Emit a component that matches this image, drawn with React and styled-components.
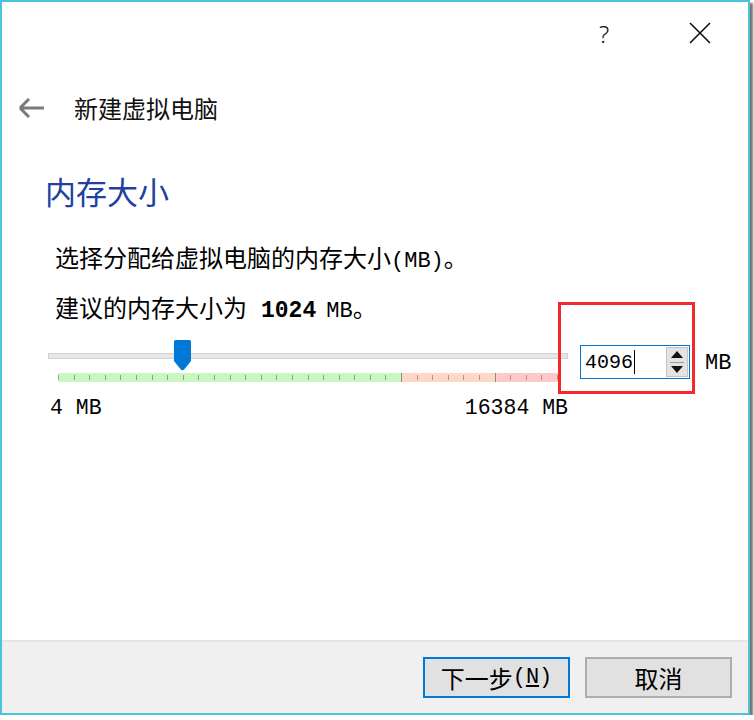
import React from "react";
import styled, { createGlobalStyle } from "styled-components";

const GlobalStyle = createGlobalStyle`
  html, body {
    margin: 0;
    padding: 0;
    background: #ffffff;
  }
  body {
    font-family: "Noto Sans CJK SC", "Noto Sans", sans-serif;
  }
`;

const Frame = styled.div`
  position: relative;
  box-sizing: border-box;
  width: 750px;
  height: 715px;
  border: 2px solid #4cc3d8;
  background: #ffffff;
  box-shadow: 3px 3px 2px rgba(0, 0, 0, 0.55);
  display: flex;
  flex-direction: column;
`;

const TitleBar = styled.div`
  height: 62px;
  display: flex;
  justify-content: flex-end;
`;

const CaptionButton = styled.div`
  width: 96px;
  height: 62px;
  display: flex;
  align-items: center;
  justify-content: center;
  font-family: "Noto Sans", sans-serif;
  font-weight: 300;
  font-size: 24px;
  color: #111;
`;

const Header = styled.div`
  height: 88px;
  display: flex;
  align-items: center;
  padding-left: 15px;
`;

const BackArrow = styled.svg`
  width: 28px;
  height: 22px;
  margin-right: 29px;
`;

const WizardTitle = styled.div`
  font-size: 24px;
  line-height: 30px;
  color: #111;
`;

const Content = styled.div`
  flex: 1;
  padding-left: 43px;
`;

const Heading = styled.div`
  margin-top: 19px;
  font-size: 31px;
  line-height: 40px;
  color: #22409f;
`;

const Line = styled.div`
  margin-left: 10px;
  margin-top: ${(p) => p.$top}px;
  font-size: 24px;
  line-height: 36px;
  color: #000;
  white-space: nowrap;
`;

const Mono = styled.span`
  font-family: "Liberation Mono", monospace;
  font-size: ${(p) => p.$size || 22}px;
  font-weight: ${(p) => (p.$bold ? 700 : 400)};
  margin: ${(p) => p.$gap || "0"};
`;

const SliderRow = styled.div`
  margin-top: 10px;
  margin-left: 3px;
  display: flex;
  align-items: flex-start;
`;

const SliderColumn = styled.div`
  width: 520px;
  display: flex;
  flex-direction: column;
`;

const Track = styled.div`
  position: relative;
  height: 31px;
`;

const Groove = styled.div`
  margin-top: 13px;
  box-sizing: border-box;
  height: 6px;
  background: #e7e7e7;
  border: 1px solid #d2d2d2;
`;

const Handle = styled.svg`
  position: absolute;
  top: 0;
  width: 17px;
  height: 31px;
`;

const TickStrip = styled.div`
  margin-top: 2px;
  margin-left: 10px;
  width: 500px;
  height: 9px;
  display: flex;
  align-items: center;
  justify-content: space-between;
  background: linear-gradient(
    to right,
    #c8f7c2 0%,
    #c8f7c2 68.6%,
    #ffd8c4 68.6%,
    #ffd8c4 87.8%,
    #ffc9c9 87.8%,
    #ffc9c9 100%
  );
`;

const Tick = styled.div`
  width: 1px;
  height: ${(p) => (p.$major ? 9 : 5)}px;
  background: ${(p) => (p.$major ? "#8a8a8a" : "#9a9a9a")};
`;

const Scale = styled.div`
  margin-top: 14px;
  padding-left: 2px;
  display: flex;
  justify-content: space-between;
  line-height: 24px;
  color: #000;
`;

const SpinWrap = styled.div`
  position: relative;
  margin-top: 5px;
  margin-left: 12px;
`;

const SpinBox = styled.div`
  box-sizing: border-box;
  width: 110px;
  height: 34px;
  border: 1px solid #0078d7;
  display: flex;
  align-items: center;
  justify-content: space-between;
  padding-left: 4px;
  padding-right: 1px;
`;

const SpinValue = styled.div`
  display: flex;
  align-items: center;
  font-family: "Liberation Mono", monospace;
  font-size: 20px;
  color: #000;
`;

const Caret = styled.div`
  width: 1px;
  height: 24px;
  background: #000;
  margin-left: 1px;
`;

const SpinButtons = styled.div`
  box-sizing: border-box;
  width: 22px;
  height: 30px;
  background: #e3e3e3;
  border: 1px solid #c4c4c4;
  display: flex;
  flex-direction: column;
  align-items: center;
  justify-content: space-evenly;
`;

const Arrow = styled.div`
  width: 0;
  height: 0;
  border-left: 6px solid transparent;
  border-right: 6px solid transparent;
  ${(p) =>
    p.$up ? "border-bottom: 7px solid #111;" : "border-top: 7px solid #111;"}
`;

const Divider = styled.div`
  width: 14px;
  height: 1px;
  background: #9a9a9a;
`;

const Annotation = styled.div`
  position: absolute;
  left: -22px;
  top: -43px;
  width: 137px;
  height: 92px;
  box-sizing: border-box;
  border: 3px solid #f42a2a;
  pointer-events: none;
`;

const Unit = styled.div`
  margin-left: 15px;
  margin-top: 5px;
  line-height: 34px;
  color: #000;
`;

const Separator = styled.div`
  height: 2px;
  background: #e6e6e6;
`;

const ButtonBar = styled.div`
  height: 71px;
  background: #f0f0f0;
  display: flex;
  justify-content: flex-end;
  align-items: flex-start;
  padding: 15px 16px 0 0;
  box-sizing: border-box;
  gap: 15px;
`;

const Button = styled.div`
  box-sizing: border-box;
  width: 147px;
  height: 41px;
  background: #e1e1e1;
  border: ${(p) => (p.$default ? "2px solid #0078d7" : "2px solid #adadad")};
  display: flex;
  align-items: center;
  justify-content: center;
  font-size: 24px;
  color: #000;
`;

const ticks = Array.from({ length: 33 }, (_, i) => i);
const value = 4096;
const min = 4;
const max = 16384;

export default function App() {
  const handleLeft = 10 + ((value - min) / (max - min)) * 500 - 8.5;
  return (
    <>
      <GlobalStyle />
      <Frame>
        <TitleBar>
          <CaptionButton>?</CaptionButton>
          <CaptionButton>
            <svg width="22" height="22" viewBox="0 0 22 22">
              <path d="M1 1 L21 21 M21 1 L1 21" stroke="#111" strokeWidth="1.6" fill="none" />
            </svg>
          </CaptionButton>
        </TitleBar>
        <Header>
          <BackArrow viewBox="0 0 28 22">
            <path
              d="M3 11 H27 M3 11 L12 2 M3 11 L12 20"
              stroke="#7a7a7a"
              strokeWidth="3"
              fill="none"
            />
          </BackArrow>
          <WizardTitle>新建虚拟电脑</WizardTitle>
        </Header>
        <Content>
          <Heading>内存大小</Heading>
          <Line $top={28}>
            选择分配给虚拟电脑的内存大小<Mono>(MB)</Mono>。
          </Line>
          <Line $top={9}>
            建议的内存大小为
            <Mono $bold $size={23} $gap="0 10px 0 14px">1024</Mono>
            <Mono>MB</Mono>。
          </Line>
          <SliderRow>
            <SliderColumn>
              <Track>
                <Groove />
                <Handle viewBox="0 0 17 31" style={{ left: handleLeft }}>
                  <path
                    d="M0 1.5 Q0 0 1.5 0 H15.5 Q17 0 17 1.5 V21 L10.2 29.5 Q8.5 31 6.8 29.5 L0 21 Z"
                    fill="#0078d7"
                  />
                </Handle>
              </Track>
              <TickStrip>
                {ticks.map((i) => (
                  <Tick key={i} $major={i === 22 || i === 28} />
                ))}
              </TickStrip>
              <Scale>
                <Mono $size={21.5}>4 MB</Mono>
                <Mono $size={21.5}>16384 MB</Mono>
              </Scale>
            </SliderColumn>
            <SpinWrap>
              <SpinBox>
                <SpinValue>
                  4096
                  <Caret />
                </SpinValue>
                <SpinButtons>
                  <Arrow $up />
                  <Divider />
                  <Arrow />
                </SpinButtons>
              </SpinBox>
              <Annotation />
            </SpinWrap>
            <Unit>
              <Mono>MB</Mono>
            </Unit>
          </SliderRow>
        </Content>
        <Separator />
        <ButtonBar>
          <Button $default>
            下一步<Mono>(<u>N</u>)</Mono>
          </Button>
          <Button>取消</Button>
        </ButtonBar>
      </Frame>
    </>
  );
}
